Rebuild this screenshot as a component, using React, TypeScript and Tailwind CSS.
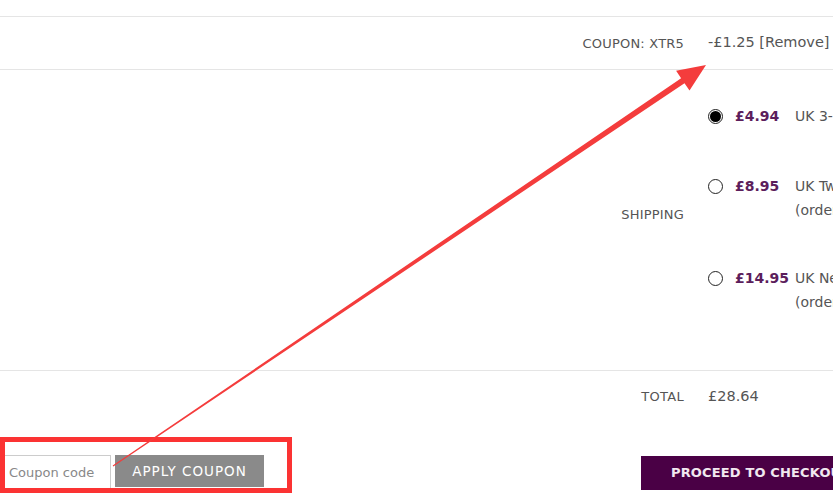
import React from 'react';

// Cart totals block, shown cropped to the window with the annotation overlay

type ShippingOption = {
  price: string;
  title: string;
  note?: string;
  checked?: boolean;
  gap: string;
};

const options: ShippingOption[] = [
  { price: '£4.94', title: 'UK 3-5 Working Days', checked: true, gap: 'mb-[46px]' },
  { price: '£8.95', title: 'UK Two Working Days', note: '(order before 2pm)', gap: 'mb-[44px]' },
  { price: '£14.95', title: 'UK Next Working Day', note: '(order before 2pm)', gap: '' },
];

const font = { fontFamily: '"DejaVu Sans", "Noto Sans", sans-serif' };

const Radio = ({ checked }: { checked?: boolean }) => (
  <span className="flex h-[15px] w-[15px] shrink-0 items-center justify-center rounded-full border border-[#222] bg-white">
    {checked && <span className="h-[11px] w-[11px] rounded-full bg-black" />}
  </span>
);

export default function App() {
  return (
    <div
      className="relative h-[495px] w-[833px] overflow-hidden bg-white text-[#555]"
      style={font}
    >
      <div className="pt-4">
        {/* Coupon row */}
        <div className="flex h-[54px] items-center border-y border-[#e5e5e5]">
          <div className="w-[684px] shrink-0 pt-0.5 text-right text-[13px] tracking-[0.2px] text-[#555]">
            COUPON: XTR5
          </div>
          <div className="whitespace-nowrap pl-6 text-[14.5px] text-[#555]">-£1.25 [Remove]</div>
        </div>

        {/* Shipping row */}
        <div className="flex h-[301px] border-b border-[#e5e5e5]">
          <div className="w-[684px] shrink-0 pt-[135px] text-right text-[13px] tracking-[0.2px]">
            SHIPPING
          </div>
          <ul className="whitespace-nowrap pl-6 pt-[34px]">
            {options.map((o) => (
              <li key={o.price} className={`flex ${o.gap}`}>
                <div className="flex h-6 items-center">
                  <Radio checked={o.checked} />
                </div>
                <span className="ml-[12px] h-6 w-[60px] shrink-0 text-[14px] font-bold leading-6 text-[#5c1e5c]">
                  {o.price}
                </span>
                <div className="text-[14px] leading-6 text-[#555]">
                  <div>{o.title}</div>
                  {o.note && <div>{o.note}</div>}
                </div>
              </li>
            ))}
          </ul>
        </div>

        {/* Total row */}
        <div className="flex h-[52px] items-center">
          <div className="w-[684px] shrink-0 text-right text-[13px] tracking-[0.3px]">TOTAL</div>
          <div className="pl-6 text-[14.5px] text-[#555]">£28.64</div>
        </div>
      </div>

      {/* Actions */}
      <div className="mt-[32px] flex items-start">
        <input
          placeholder="Coupon code"
          className="h-[34px] w-[111px] shrink-0 border border-[#ccc] px-2 text-[13px] text-[#555] placeholder:text-[#888] outline-none"
          style={font}
        />
        <button className="ml-1 h-[32px] w-[149px] shrink-0 bg-[#8a8a8a] text-[13.5px] tracking-[1px] text-white">
          APPLY COUPON
        </button>
        <button className="ml-[377px] mt-px h-[34px] w-[220px] shrink-0 whitespace-nowrap bg-[#4a0045] pl-[30px] text-left text-[13px] font-bold tracking-[0.15px] text-[#f1e8f0]">
          PROCEED TO CHECKOUT
        </button>
      </div>

      {/* Annotation overlay */}
      <div className="pointer-events-none absolute left-0 top-[437px] h-[56px] w-[292px] border-[5px] border-[#fb3333]" />
      <svg className="pointer-events-none absolute left-0 top-0" width="833" height="495">
        <polygon
          points="112.7,465.6 681.1,78.2 676.1,70.8 706,65 689.5,90.6 684.5,83.2 113.3,466.4"
          fill="#f43c3c"
        />
      </svg>
    </div>
  );
}
